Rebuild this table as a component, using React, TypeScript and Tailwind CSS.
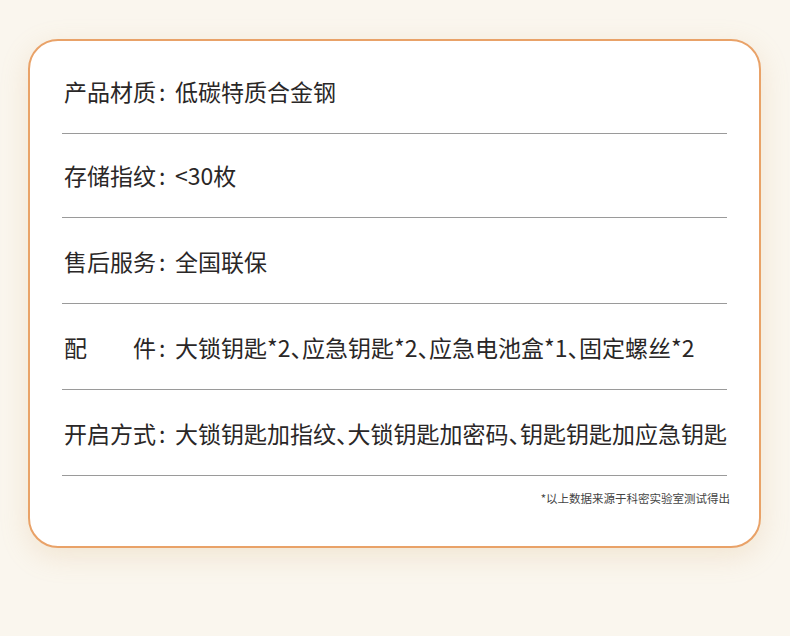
const specs = [
  { label: '产品材质', value: '低碳特质合金钢', h: 'h-[93px]' },
  { label: '存储指纹', value: '<30枚', h: 'h-[84px]' },
  { label: '售后服务', value: '全国联保', h: 'h-[86px]' },
  { label: '配件', value: '大锁钥匙*2、应急钥匙*2、应急电池盒*1、固定螺丝*2', h: 'h-[86px]' },
  { label: '开启方式', value: '大锁钥匙加指纹、大锁钥匙加密码、钥匙钥匙加应急钥匙', h: 'h-[86px]' },
]

export default function App() {
  return (
    <div className="min-h-[636px] w-[790px] bg-[#faf6ee] pt-[39px] pl-[28px] font-['Noto_Sans_CJK_SC','Noto_Sans',sans-serif]">
      <div className="w-[733px] h-[509px] rounded-[30px] border-2 border-[#e9a268] bg-white shadow-[0_8px_28px_rgba(214,170,110,0.22)] px-[32px]">
        {specs.map((row) => (
          <div
            key={row.label}
            className={`${row.h} flex items-end border-b border-[#9a9a9a] pb-[30px] pl-[2px] text-[23px] leading-[23px] text-[#2a2727]`}
          >
            <span className="w-[92px] text-justify [text-align-last:justify]">{row.label}</span>
            <span className="w-[19px] pl-[3px]">:</span>
            <span className="[font-feature-settings:'halt']">{row.value}</span>
          </div>
        ))}
        <div className="flex justify-end pt-[15px] mr-[-3px] text-[11.5px] leading-[14px] text-[#444]">
          *以上数据来源于科密实验室测试得出
        </div>
      </div>
    </div>
  )
}
